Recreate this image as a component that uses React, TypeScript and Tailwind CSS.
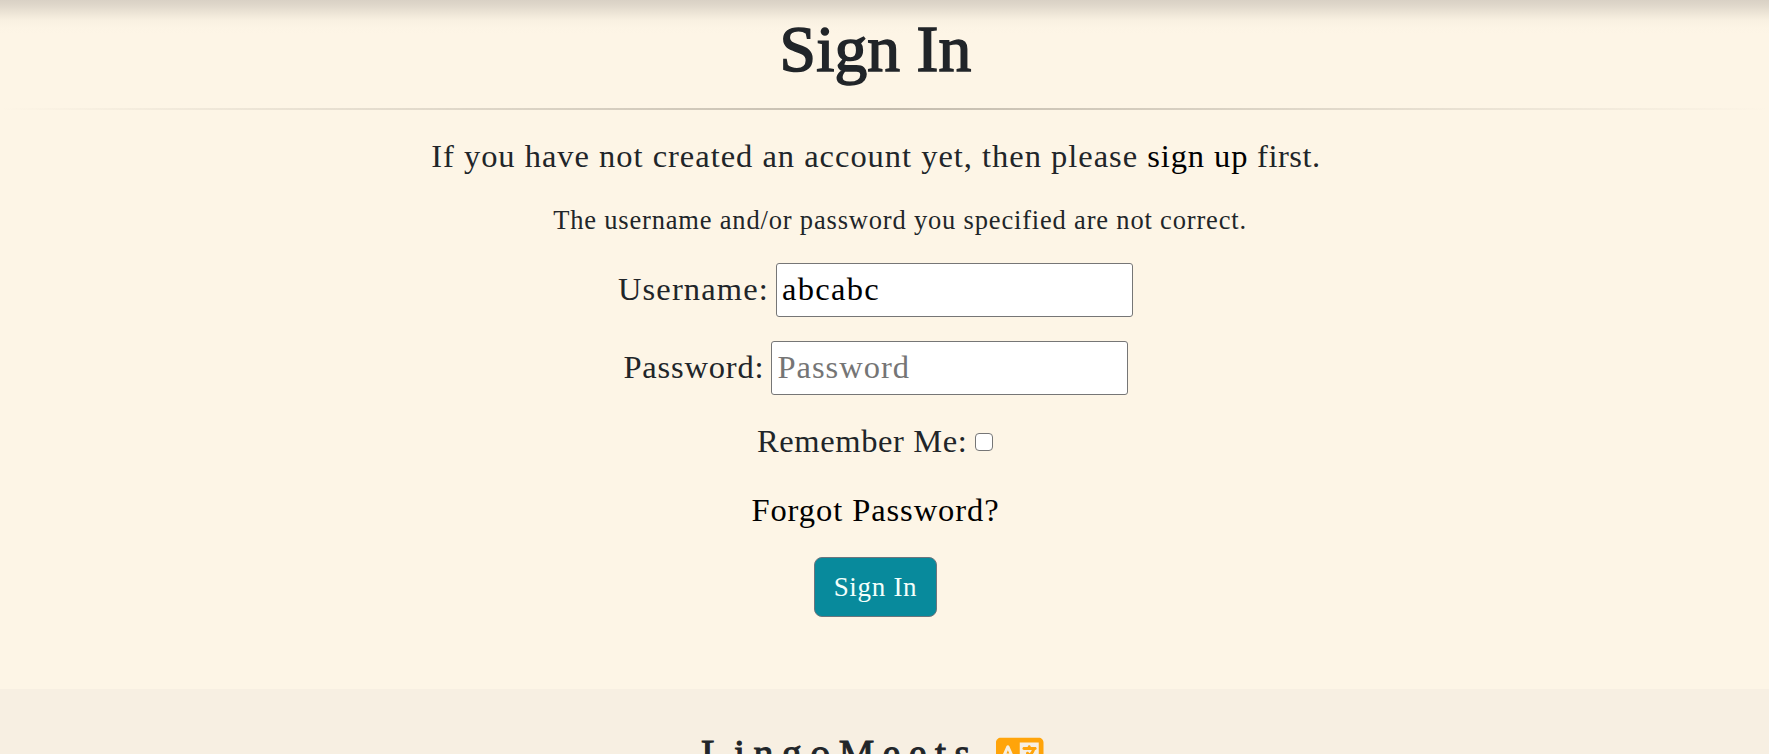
import { FaLanguage } from "react-icons/fa6";

export default function App() {
  return (
    <div className="h-[754px] overflow-hidden bg-[#fdf5e6] font-['Liberation_Serif',serif] text-[#212529]">
      <main className="flex h-[689px] flex-col bg-[linear-gradient(to_bottom,#d9d1c5_0px,#dfd7ca_5px,#ebe3d5_12px,#f8f0e1_20px,#fcf4e5_27px,#fdf5e6_34px)] pt-3">
        <h1 className="h-[74px] w-[1751px] text-center text-[65.5px] leading-[74px] tracking-[0.1px] [-webkit-text-stroke:1.6px_#212529]">
          Sign In
        </h1>
        <hr className="mt-[22px] h-[2px] w-full shrink-0 border-0 bg-[linear-gradient(to_right,transparent,#c4bcae,transparent)]" />
        <p className="mt-[22px] w-[1752px] whitespace-nowrap text-center text-[32.5px] leading-[48px] tracking-[0.98px]">
          If you have not created an account yet, then please{" "}
          <a href="#" className="tracking-[0.9px] text-black">sign up</a>
          <span className="tracking-[0.55px]"> first.</span>
        </p>
        <p className="mt-5 w-[1752px] pl-12 text-center text-[26.5px] leading-10 tracking-[0.82px]">
          The username and/or password you specified are not correct.
        </p>
        <form className="mt-[23px] flex w-[1751px] flex-col items-center text-[32.5px] leading-[48px]">
          <div className="flex h-[54px] items-center">
            <label htmlFor="username" className="w-[158px] pb-[2px] tracking-[1.12px]">Username:</label>
            <input id="username" defaultValue="abcabc" className="h-[54px] w-[357px] rounded-[3px] border border-[#767676] bg-white pt-0 pb-px pl-[5px] tracking-[1.3px] text-black" />
          </div>
          <div className="mt-6 flex h-[54px] items-center">
            <label htmlFor="password" className="w-[147px] pb-[2px] tracking-[0.8px]">Password:</label>
            <input id="password" type="password" placeholder="Password" className="h-[54px] w-[357px] rounded-[3px] border border-[#767676] bg-white pt-0 pb-px pl-[6px] tracking-[0.98px] placeholder:text-[#757575]" />
          </div>
          <div className="mt-[22px] flex h-12 items-center pr-px">
            <label htmlFor="remember" className="w-[218px] tracking-[0.62px]">Remember Me:</label>
            <input id="remember" type="checkbox" className="mt-[2px] h-[18px] w-[18px] appearance-none rounded-[4px] border-[1.5px] border-[#767676] bg-white" />
          </div>
          <a href="#" className="mt-[21px] tracking-[0.93px] text-black">Forgot Password?</a>
          <button type="button" className="mt-[23px] h-[60px] w-[123px] rounded-lg border border-[#6c757d] bg-[#088a9c] text-[27px] tracking-[0.7px] text-[#f4fffb]">
            Sign In
          </button>
        </form>
      </main>
      <footer className="flex h-[130px] items-center justify-center bg-[#f7efe2] pr-[24px]">
        <span className="text-[40px] leading-[56px] tracking-[8.4px] [-webkit-text-stroke:1px_#212529]">LingoMeets</span>
        <FaLanguage className="mb-[4px] ml-[18px] h-[38px] w-[47.5px] text-[#ffa40a]" />
      </footer>
    </div>
  );
}
